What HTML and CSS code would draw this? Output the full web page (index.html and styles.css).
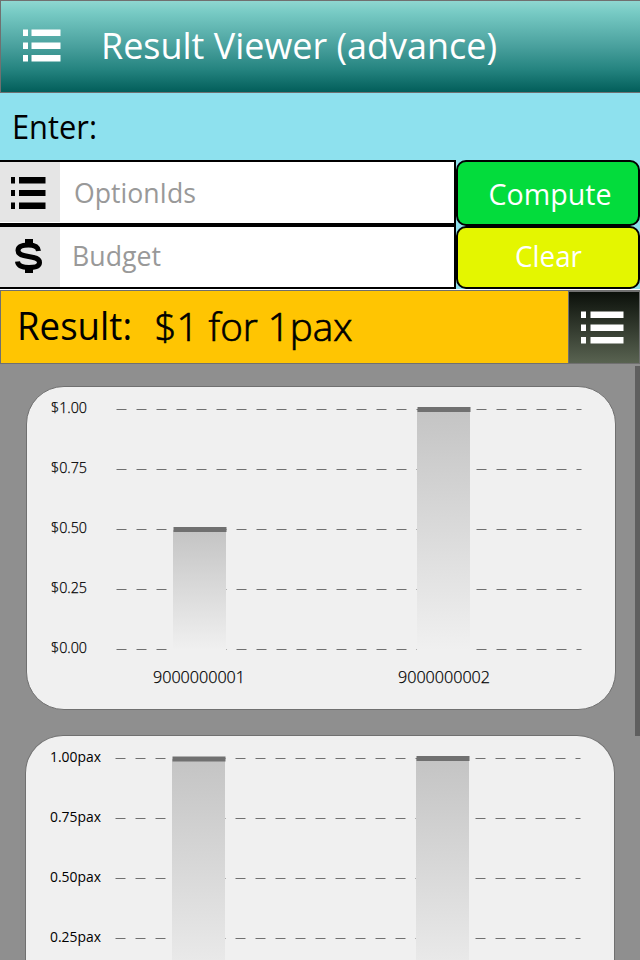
FILE: index.html
```html
<!DOCTYPE html>
<html lang="en">
<head>
<meta charset="utf-8">
<title>Result Viewer (advance)</title>
<link rel="stylesheet" href="styles.css">
</head>
<body>
<header class="topbar">
  <svg class="topbar-icon" width="38" height="34" viewBox="0 0 38 34" fill="#fff"><path d="M0 .5h5v6.500H0zM8.500 .5H37.500v6.500H8.500zM0 13.500h5v6.500H0zM8.500 13.500H37.500v6.500H8.500zM0 26h5v6.500H0zM8.500 26H37.500v6.500H8.500z"/></svg>
  <h1 class="topbar-title"><svg width="440" height="60"><text x="-1" y="43" textLength="396" lengthAdjust="spacingAndGlyphs">Result Viewer (advance)</text></svg></h1>
</header>
<section class="entry">
  <h2 class="entry-title"><svg width="110" height="50"><text x="0" y="37" textLength="85" lengthAdjust="spacingAndGlyphs">Enter:</text></svg></h2>
  <div class="form">
    <div class="fields">
      <label class="field field-options">
        <span class="field-icon"><svg width="60" height="60"><path d="M11 15h4v6.500h-4zM19 15h26.500v6.500H19zM11 28h4v6h-4zM19 28h26.500v6H19zM11 40.500h4v6.500h-4zM19 40.500h26.500v6.500H19z"/></svg></span>
        <svg class="placeholder" width="150" height="60"><text x="14" y="41" textLength="122" lengthAdjust="spacingAndGlyphs">OptionIds</text></svg>
      </label>
      <label class="field field-budget">
        <span class="field-icon"><svg width="60" height="60"><path d="M25 12h8v6h-8zM25 40h8v6h-8z"/><path d="M38.500 24C38 19.500 34 18 28.500 18C21.500 18 18 20 18 23.500C18 27.500 22.500 28.500 28.500 29.500C35 30.500 39.500 31.500 39.500 35.500C39.500 39.500 35 40.500 29 40.500C22 40.500 18 39 17.500 34.500" fill="none" stroke="#000" stroke-width="5"/></svg></span>
        <svg class="placeholder" width="150" height="60"><text x="12" y="39" textLength="89" lengthAdjust="spacingAndGlyphs">Budget</text></svg>
      </label>
    </div>
    <div class="actions">
      <button class="button compute"><svg width="180" height="62"><text x="30.500" y="43" textLength="123" lengthAdjust="spacingAndGlyphs">Compute</text></svg></button>
      <button class="button clear"><svg width="180" height="59"><text x="57" y="39" textLength="67" lengthAdjust="spacingAndGlyphs">Clear</text></svg></button>
    </div>
  </div>
</section>
<section class="result">
  <svg class="result-text" width="380" height="72">
    <text x="16" y="49" textLength="115" lengthAdjust="spacingAndGlyphs">Result:</text>
    <text class="result-value" x="153.500" y="50" textLength="198" lengthAdjust="spacingAndGlyphs">$1 for 1pax</text>
  </svg>
  <button class="result-menu"><svg width="70" height="71"><path fill="#fff" d="M12 19.500h5v6.500h-5zM21.500 19.500H54.500v6.500H21.500zM12 32.500h5v6.500h-5zM21.500 32.500H54.500v6.500H21.500zM12 45h5v6.500h-5zM21.500 45H54.500v6.500H21.500z"/></svg></button>
</section>
<main class="results">
  <article class="card">
    <svg class="chart" width="588" height="322">
      <defs><linearGradient id="bar" x1="0" y1="0" x2="0" y2="1"><stop offset="0" stop-color="#c4c4c4"/><stop offset="1" stop-color="#f0f0f0"/></linearGradient></defs>
      <path class="grid" d="M89.500 22.500H554.500M89.500 82.500H554.500M89.500 142.500H554.500M89.500 202.500H554.500M89.500 262.500H554.500"/>
      <path class="bar" d="M146 143h53v120h-53z"/><path class="cap" d="M146.500 140h53v5h-53z"/>
      <path class="bar" d="M390 23h53v240h-53z"/><path class="cap" d="M390.500 20h53v5h-53z"/>
      <g class="amounts">
        <text x="24" y="26" textLength="36" lengthAdjust="spacingAndGlyphs">$1.00</text>
        <text x="24" y="86" textLength="36" lengthAdjust="spacingAndGlyphs">$0.75</text>
        <text x="24" y="146" textLength="36" lengthAdjust="spacingAndGlyphs">$0.50</text>
        <text x="24" y="206" textLength="36" lengthAdjust="spacingAndGlyphs">$0.25</text>
        <text x="24" y="266" textLength="36" lengthAdjust="spacingAndGlyphs">$0.00</text>
      </g>
      <g class="options">
        <text x="126" y="296" textLength="92" lengthAdjust="spacingAndGlyphs">9000000001</text>
        <text x="371" y="296" textLength="92" lengthAdjust="spacingAndGlyphs">9000000002</text>
      </g>
    </svg>
  </article>
  <article class="card card-pax">
    <svg class="chart" width="588" height="224">
      <path class="grid" d="M89.500 22.500H554.500M89.500 82.500H554.500M89.500 142.500H554.500M89.500 202.500H554.500"/>
      <path class="bar" d="M146 23h53v240h-53z"/><path class="cap" d="M146.500 20.500h53v5h-53z"/>
      <path class="bar" d="M390 23h53v240h-53z"/><path class="cap" d="M390.500 20h53v5h-53z"/>
      <g class="pax">
        <text x="24" y="26" textLength="51" lengthAdjust="spacingAndGlyphs">1.00pax</text>
        <text x="24" y="86" textLength="51" lengthAdjust="spacingAndGlyphs">0.75pax</text>
        <text x="24" y="146" textLength="51" lengthAdjust="spacingAndGlyphs">0.50pax</text>
        <text x="24" y="206" textLength="51" lengthAdjust="spacingAndGlyphs">0.25pax</text>
      </g>
    </svg>
  </article>
  <div class="scrollbar"></div>
</main>
</body>
</html>
```
FILE: styles.css
```css
* { box-sizing: border-box; }
body {
  margin: 0;
  width: 640px;
  height: 960px;
  overflow: hidden;
  display: flex;
  flex-direction: column;
  background: #fff;
  font-family: "Open Sans", "Noto Sans", sans-serif;
}
svg { display: block; }
h1, h2 { margin: 0; font-weight: 400; }
button { padding: 0; font: inherit; }
.topbar {
  height: 93px;
  flex: none;
  display: flex;
  align-items: flex-start;
  border: 1px solid #707070;
  border-right: 0;
  background: linear-gradient(#8fd7d1, #78cbc5 12%, #49a09d 50%, #258480 75%, #025e5a);
}
.topbar-icon { margin: 28px 0 0 22px; }
.topbar-title { margin: 15px 0 0 41px; font-size: 37px; fill: #fff; }
.topbar-title svg { overflow: visible; }
.entry { height: 197px; flex: none; background: linear-gradient(#8ee1ee 196px, #fff 196px); }
.entry-title { height: 67px; padding: 9px 0 0 12px; font-size: 33px; }
.form { display: flex; height: 129px; }
.fields { width: 456px; }
.field {
  display: flex;
  background: #fff;
  border: 2px solid #000;
  border-left: 0;
}
.field-options { height: 65px; }
.field-budget { height: 64px; }
.field-icon { width: 60px; height: 60px; background: #e5e5e5; }
.placeholder { font-size: 27.500px; fill: #999; }
.actions { flex: 1; }
.button { display: block; width: 184px; border: 2px solid #000; border-radius: 10px; fill: #fff; font-size: 29px; }
.compute { height: 66px; background: #03dc3c; }
.clear { height: 63px; background: #e4f600; }
.result {
  height: 74px;
  flex: none;
  display: flex;
  justify-content: space-between;
  border: 1px solid #707070;
  border-right: 0;
  background: #ffc502;
}
.result-text { font-size: 38px; }
.result-value { font-weight: 300; stroke: #000; stroke-width: .7px; }
.result-menu { width: 72px; height: 73px; border: 1px solid #707070; background: linear-gradient(#0b100a, #596351); }
.results { position: relative; flex: 1; min-height: 0; overflow: hidden; padding: 22px 0 0 26px; background: #8f8f8f; }
.card { width: 590px; height: 324px; border: 1px solid #707070; border-radius: 38px; background: #f0f0f0; overflow: hidden; }
.card-pax { height: 225px; margin: 25px 0 0 -1px; border-bottom: 0; border-radius: 38px 38px 0 0; }
.grid { stroke: #707070; fill: none; stroke-dasharray: 10 10; }
.bar { fill: url(#bar); }
.cap { fill: #707070; }
.amounts, .options { font-weight: 300; stroke: #000; stroke-width: .25px; }
.amounts { font-size: 15px; }
.options { font-size: 16px; }
.pax { font-size: 15px; }
.scrollbar { position: absolute; top: 2px; right: 0; width: 5px; height: 370px; background: #5f5f5f; }
```
